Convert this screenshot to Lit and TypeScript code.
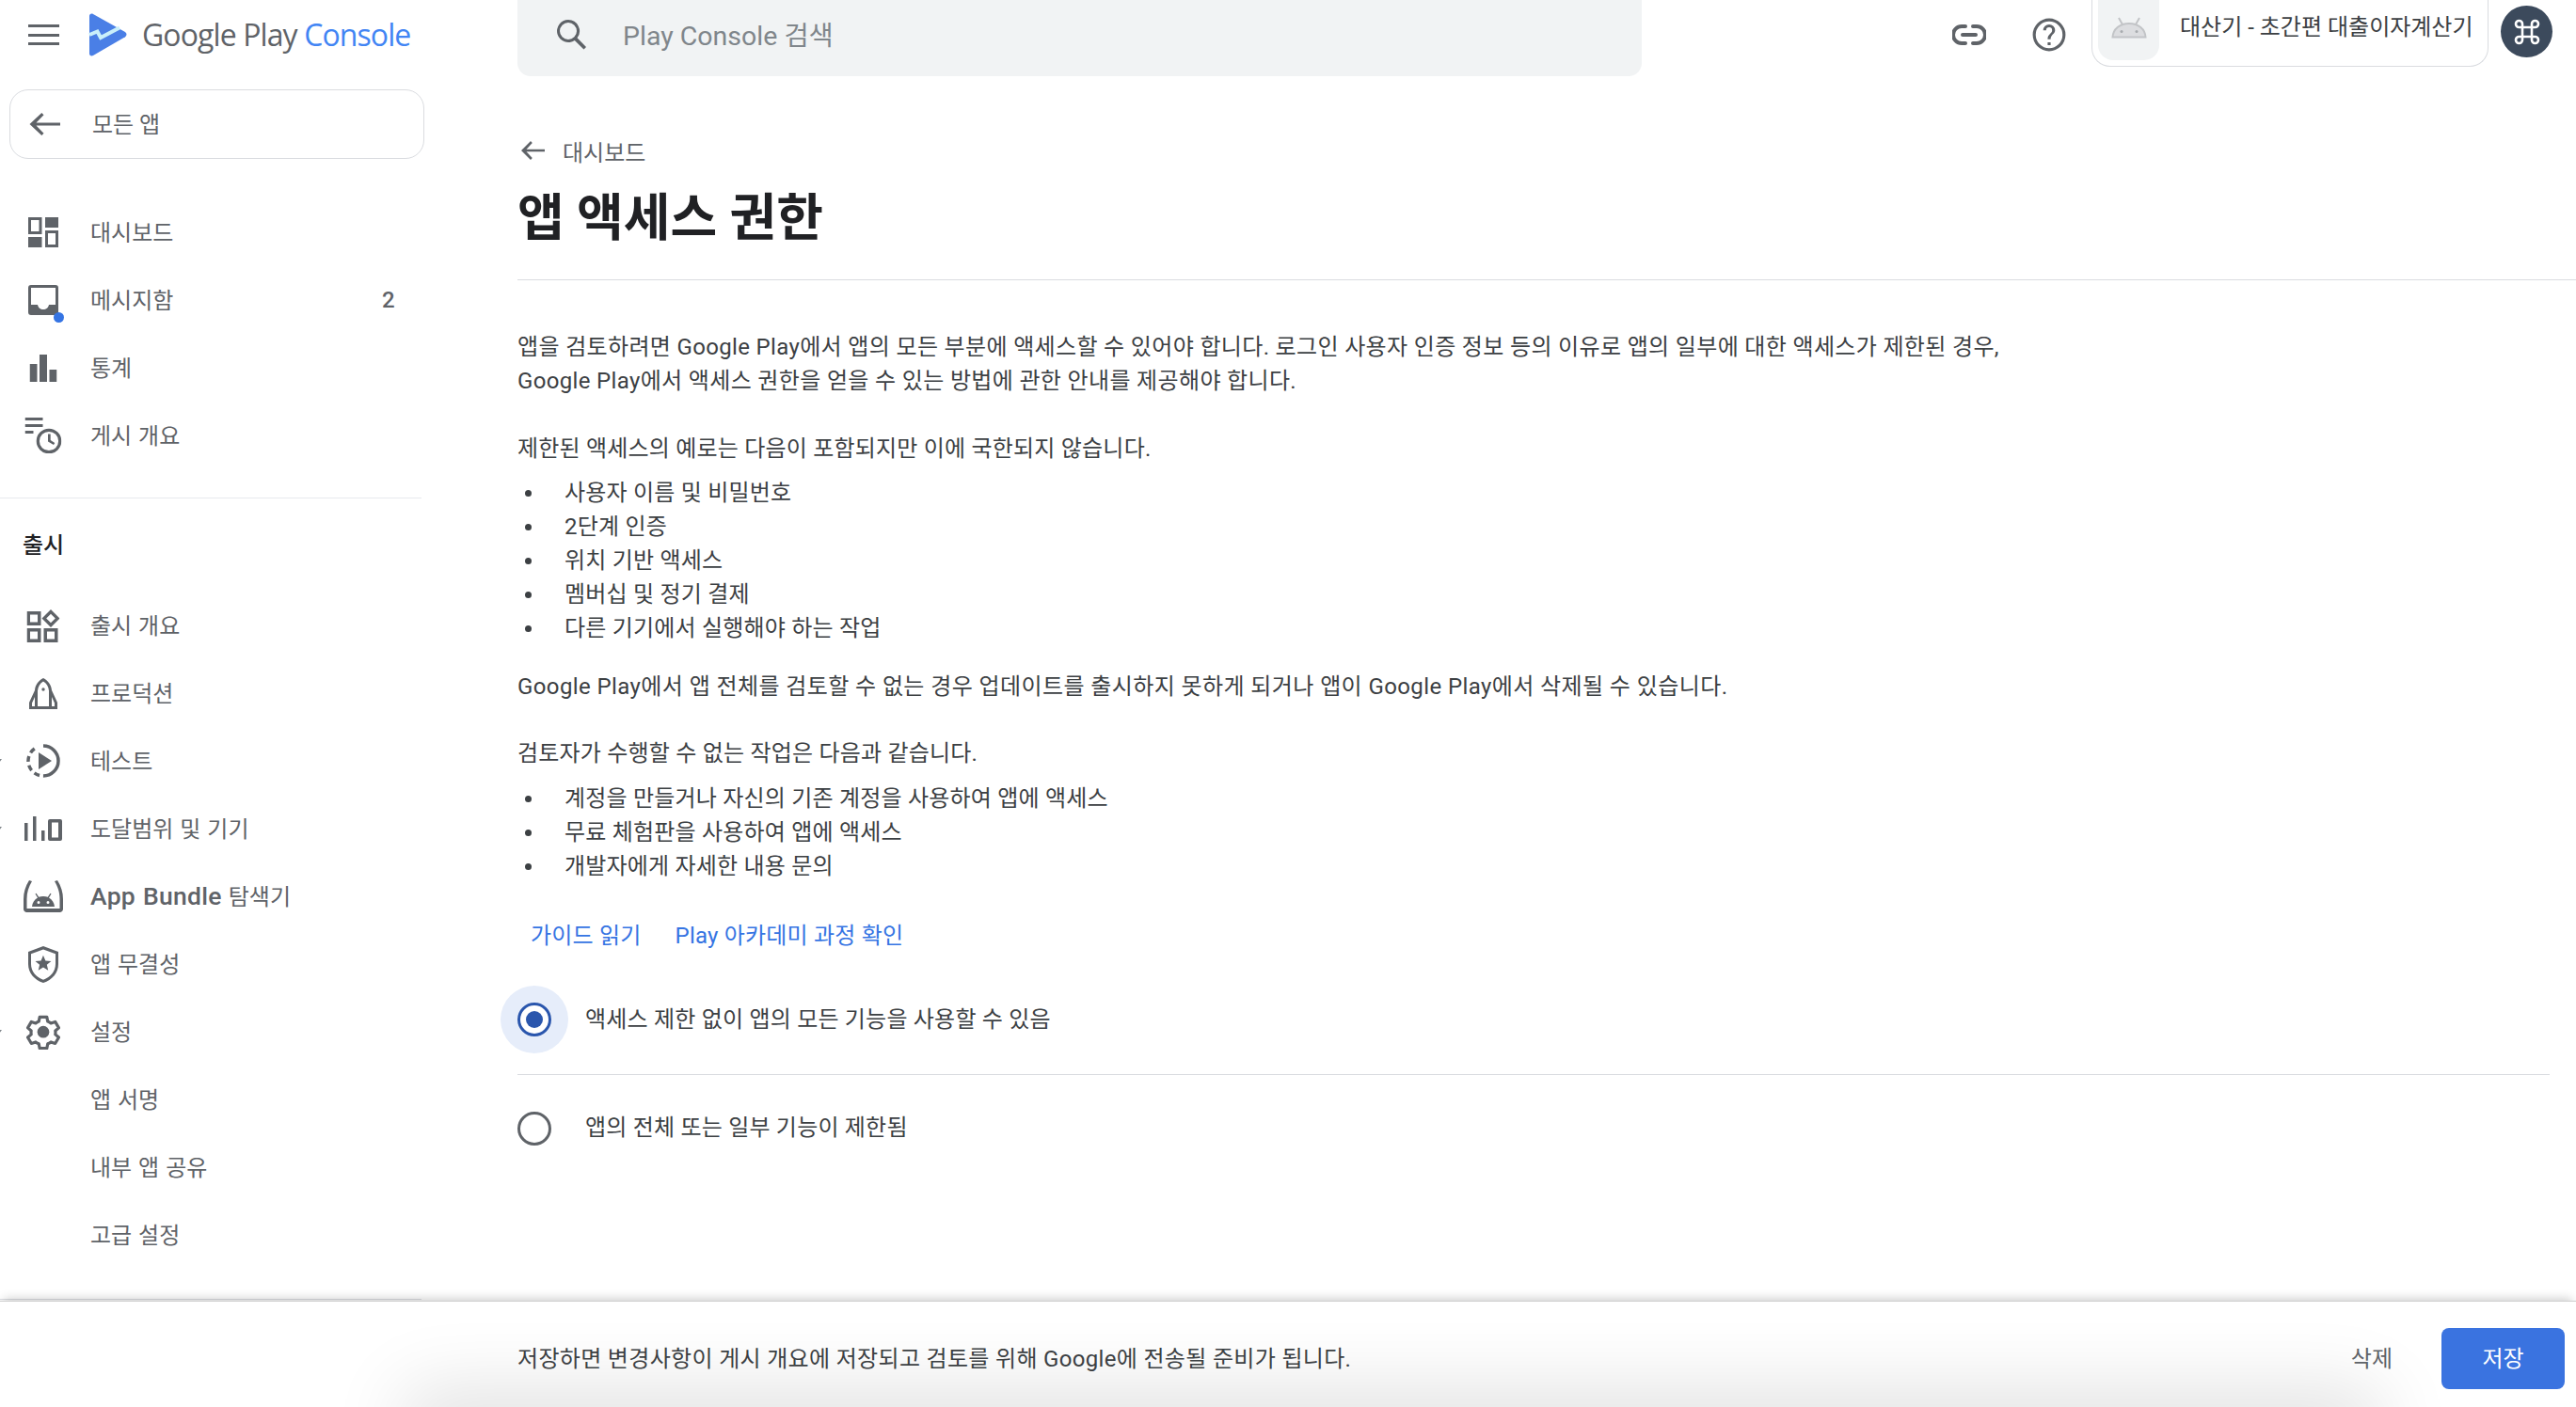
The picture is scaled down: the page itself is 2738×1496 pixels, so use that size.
import { LitElement, html, css, svg } from "lit";
import { customElement } from "lit/decorators.js";

const I: Record<string, any> = {
  dash: svg`<path fill-rule="evenodd" d="M0 0h14.500v18H0zM3 3v12h8.500V3zM18 0h14v11H18zM0 21h14.500v11H0zM18 14h14v18H18zM21 17v12h8V17z"/>`,
  inbox: svg`<path fill-rule="evenodd" d="M3 0h26a3 3 0 0 1 3 3v26a3 3 0 0 1-3 3H3a3 3 0 0 1-3-3V3a3 3 0 0 1 3-3zm0 3v18h7c.5 3 3 5 6 5s5.500-2 6-5h7V3z"/>`,
  stats: svg`<path d="M0 10h8v19H0zM10.500 0h8v29h-8zM21 16h8v13h-8z"/>`,
  pub: svg`<path d="M0 0h19v3H0zM0 7h19v3H0zM0 14h9v3H0z"/><circle cx="25.500" cy="25" r="11.700" fill="none" stroke="#5f6368" stroke-width="3.200"/><path d="M24.500 17.500h2.700v6.600l4.600 2.800-1.300 2.200-6-3.600z"/>`,
  rel: svg`<path fill-rule="evenodd" d="M0 2h15v15H0zm3.500 3.500v8h8v-8zM25.500 0L35 9.500 25.500 19 16 9.500zm0 4.700L20.700 9.500l4.800 4.800 4.800-4.800zM0 20h15v15H0zm3.500 3.500v8h8v-8zM18 20h15v15H18zm3.500 3.500v8h8v-8z"/>`,
  rocket: svg`<path fill-rule="evenodd" d="M15 0c5 2.500 8.500 7 9 13l6 13v7H0v-7l6-13c.5-6 4-10.500 9-13zm0 3.500c-3.500 2-5.500 5.500-6 10V30h12V13.500c-.5-4.500-2.500-8-6-10zM6 20l-3 6.500V30h3zm18 0v10h3v-3.500z"/><circle cx="15" cy="12" r="1.700"/>`,
  test: svg`<circle cx="18" cy="18" r="16" fill="none" stroke="#5f6368" stroke-width="3.500" stroke-dasharray="50 4 6 4 6 4 6 4 6 10.500" transform="rotate(-90 18 18)"/><path d="M13 9l14 9-14 9z"/>`,
  reach: svg`<path fill-rule="evenodd" d="M0 7h3.500v19H0zM9 0h3.500v26H9zM18 15h3.500v11H18zM27 3h11a2 2 0 0 1 2 2v19a2 2 0 0 1-2 2H27a2 2 0 0 1-2-2V5a2 2 0 0 1 2-2zm2 3.500v16h7v-16z"/>`,
  bundle: svg`<path fill-rule="evenodd" d="M6 0l3 1C5.500 7 3.500 12.500 3.500 20v10h35V20c0-7.500-2-13-5.500-19l3-1c4 6 6 13 6 20v10a4 4 0 0 1-3 4H3a4 4 0 0 1-3-4V20C0 13 2 6 6 0z"/><path fill-rule="evenodd" d="M9 28c.4-4 2.500-7.500 6-9.500l-2.500-4 1-.7 2.700 4c3-1.200 6.600-1.200 9.600 0l2.700-4 1 .7-2.500 4c3.500 2 5.600 5.500 6 9.500zm7-6a1.500 1.500 0 1 0 0 3 1.500 1.500 0 0 0 0-3zm10 0a1.500 1.500 0 1 0 0 3 1.500 1.500 0 0 0 0-3z"/>`,
  shield: svg`<path fill-rule="evenodd" d="M16 0l16 6v13c0 9.500-6.500 17-16 20C6.500 36 0 28.500 0 19V6zm0 3.500L3 8.300V19c0 7.800 5.200 14 13 16.800C23.800 33 29 26.800 29 19V8.300z"/><path d="M16 8.500l2.800 6.500 7 .6-5.300 4.600 1.600 6.800-6.100-3.600-6.100 3.600 1.600-6.800-5.300-4.600 7-.6z" transform="translate(2.200 2.500) scale(.86)"/>`,
  gear: svg`<path fill="none" stroke="#5f6368" stroke-width="2" d="M14.400 2.100h-4.800l-.6 3a8 8 0 0 0-2.100 1.200l-2.900-1-2.400 4.100 2.300 2a8 8 0 0 0 0 2.400l-2.300 2 2.400 4.100 2.900-1a8 8 0 0 0 2.100 1.200l.6 3h4.800l.6-3a8 8 0 0 0 2.100-1.200l2.900 1 2.400-4.100-2.300-2a8 8 0 0 0 0-2.400l2.300-2-2.400-4.100-2.900 1a8 8 0 0 0-2.100-1.200z" stroke-linejoin="round"/><circle cx="12" cy="12.100" r="4"/>`,
};

const nav1 = [
  ["대시보드", "dash", 32, 32, "0 0 32 32"],
  ["메시지함", "inbox", 32, 32, "0 0 32 32"],
  ["통계", "stats", 29, 29, "0 0 29 29"],
  ["게시 개요", "pub", 39, 38, "0 0 39 38"],
];
const nav2 = [
  ["출시 개요", "rel", 35, 35, "0 0 35 35"],
  ["프로덕션", "rocket", 30, 33, "0 0 30 33"],
  ["테스트", "test", 36, 36, "0 0 36 36"],
  ["도달범위 및 기기", "reach", 40, 26, "0 0 40 26"],
  ["App Bundle 탐색기", "bundle", 42, 34, "0 0 42 34"],
  ["앱 무결성", "shield", 32, 39, "0 0 32 39"],
  ["설정", "gear", 38, 38, "0 0 24 24"],
  ["앱 서명", "", 0, 0, ""],
  ["내부 앱 공유", "", 0, 0, ""],
  ["고급 설정", "", 0, 0, ""],
];

@customElement("app-root")
export class AppRoot extends LitElement {
  static styles = css`
    :host {
      display: block;
      width: 2738px;
      height: 1496px;
      overflow: hidden;
      background: #fff;
      font-family: Roboto, "Noto Sans CJK KR", sans-serif;
      color: #3c4043;
      font-size: 24px;
    }
    svg { display: block; fill: #5f6368; flex: none; }
    .app { display: flex; flex-direction: column; height: 1496px; position: relative; overflow: hidden; }
    .upper { flex: 1; display: flex; min-height: 0; overflow: hidden; }
    .side { width: 550px; flex: none; display: flex; flex-direction: column; }
    .brand { height: 95px; display: flex; align-items: flex-start; }
    .menu { margin: 26px 0 0 30px; width: 33px; height: 22px; display: flex; flex-direction: column; justify-content: space-between; }
    .menu i { display: block; height: 3px; background: #5f6368; }
    .logo { margin: 14px 0 0 30px; }
    .word { margin: 15px 0 0 15px; font-family: "Open Sans", sans-serif; font-size: 32px; line-height: 44px; color: #5f6368; letter-spacing: -0.900px; white-space: nowrap; }
    .word b { font-weight: 400; color: #4285f4; }
    .all { margin-left: 10px; width: 441px; height: 74px; box-sizing: border-box; border: 1px solid #dadce0; border-radius: 20px; display: flex; align-items: center; color: #5f6368; }
    .all svg { margin-left: 20px; }
    .all span { margin-left: 34px; padding-bottom: 4px; }
    .nav { display: flex; flex-direction: column; }
    .nav.a { margin-top: 42px; }
    .row { height: 72px; position: relative; display: flex; align-items: center; color: #5f6368; word-spacing: 1px; }
    .slot { position: absolute; left: 46px; top: 0; bottom: 0; transform: translateX(-50%); display: flex; align-items: center; }
    .row span { margin-left: 96px; padding-bottom: 4px; }
    .row b { font-weight: 500; font-size: 26.500px; letter-spacing: .3px; }
    .row em { position: absolute; left: 406px; font-style: normal; font-weight: 500; }
    .dot { position: absolute; left: 57px; top: 49px; width: 11px; height: 11px; border-radius: 50%; background: #3574e3; }
    .chev { position: absolute; left: -4px; top: 34px; width: 6px; height: 4px; background: #80868b; clip-path: polygon(0 0,100% 0,50% 100%); }
    .sep { height: 1px; background: #e8eaed; width: 448px; margin-top: 30px; flex: none; }
    .sep.end { margin-top: 32px; background: #dadce0; }
    .sec { height: 99px; display: flex; align-items: center; padding: 0 0 5px 24px; box-sizing: border-box; color: #202124; font-weight: 500; }
    .main { flex: 1; min-width: 0; display: flex; flex-direction: column; }
    .top { height: 81px; display: flex; flex: none; }
    .search { width: 1195px; height: 81px; background: #f1f3f4; border-radius: 0 0 14px 14px; display: flex; align-items: center; color: #80868b; font-size: 28.500px; padding-bottom: 8px; box-sizing: border-box; }
    .search svg { margin-left: 41px; }
    .search span { margin-left: 37px; padding-bottom: 3px; }
    .tools { flex: 1; display: flex; position: relative; }
    .link { position: absolute; left: 330px; top: 23px; }
    .help { position: absolute; left: 414px; top: 18px; }
    .chip { position: absolute; left: 478px; top: -1px; width: 422px; height: 72px; box-sizing: border-box; border: 1px solid #dadce0; border-top: 0; border-radius: 0 0 20px 20px; display: flex; align-items: flex-start; }
    .apk { margin-left: 6px; width: 65px; height: 65px; border-radius: 0 0 16px 16px; background: #f1f3f4; display: flex; align-items: center; justify-content: center; padding-bottom: 4px; box-sizing: border-box; }
    .chip span { margin: 10px 0 0 22px; color: #3c4043; white-space: nowrap; }
    .av { position: absolute; left: 913px; top: 6px; width: 55px; height: 55px; border-radius: 50%; background: #3c4a5c; color: #fff; display: flex; align-items: center; justify-content: center; }
    .content { flex: 1; min-height: 0; letter-spacing: .2px; }
    .crumb { margin-top: 60px; height: 38px; display: flex; align-items: center; color: #5f6368; letter-spacing: 0; padding-left: 4px; }
    .crumb span { margin-left: 19px; }
    h1 { margin: 12px 0 0; height: 84px; font-size: 54px; line-height: 84px; font-weight: 600; color: #202124; letter-spacing: 0; }
    .rule { height: 1px; background: #dadce0; margin-top: 22px; }
    .body { margin-top: 53px; width: 1640px; }
    p { margin: 0; line-height: 36px; white-space: nowrap; }
    p.lat { letter-spacing: .34px; }
    p.g1 { margin-top: 36px; }
    p.g2 { margin-top: 26px; letter-spacing: .4px; }
    p.g3 { margin-top: 35px; }
    ul { margin: 11px 0 0; padding: 0; list-style: none; }
    ul.u2 { margin-top: 12px; }
    li { height: 36px; line-height: 36px; display: flex; align-items: center; white-space: nowrap; }
    li::before { content: ""; width: 7px; height: 7px; border-radius: 50%; background: #3c4043; margin: 0 35px 0 8px; flex: none; }
    .links { display: flex; margin-top: 38px; color: #3574e3; padding-left: 14px; gap: 36px; line-height: 36px; }
    .radio { display: flex; align-items: center; height: 72px; position: relative; white-space: nowrap; }
    .r1 { margin-top: 35px; }
    .ring { margin-left: 0; width: 36px; height: 36px; box-sizing: border-box; border-radius: 50%; border: 3px solid #5f6368; flex: none; }
    .ring.on { border-color: #2a56ad; display: flex; align-items: center; justify-content: center; box-shadow: 0 0 0 18px #e6edfa; }
    .ring.on i { width: 18px; height: 18px; border-radius: 50%; background: #2a56ad; display: block; }
    .radio span { margin-left: 36px; padding-bottom: 5px; }
    .radio.r2 span { padding-bottom: 7px; }
    .div2 { height: 1px; background: #dadce0; margin: 22px 28px 0 0; }
    .r2 { margin-top: 21px; }
    .foot { height: 113px; flex: none; border-top: 1px solid #cfcfcf; box-sizing: border-box; box-shadow: 0 -6px 10px -4px rgba(0,0,0,.2); display: flex; align-items: center; position: relative; background: #fff; padding: 8px 0 0 550px; letter-spacing: .32px; }
    .glow { position: absolute; left: 450px; width: 2060px; top: 113px; height: 40px; box-shadow: 0 0 80px 20px rgba(0,0,0,.12); }
    .ftxt { position: relative; flex: 1; padding-bottom: 4px; }
    .del { position: relative; color: #5f6368; margin-right: 52px; padding-bottom: 4px; letter-spacing: 0; }
    .save { position: relative; width: 131px; height: 65px; background: #3a73e0; color: #fff; border-radius: 8px; display: flex; align-items: center; justify-content: center; margin-right: 12px; letter-spacing: 0; padding-bottom: 3px; box-sizing: border-box; }
  `;

  private row(r: any[], i: number, a: boolean) {
    const [t, ic, w, h, vb] = r;
    const label = t.startsWith("App Bundle") ? html`<b>App Bundle</b> 탐색기` : t;
    return html`<div class="row">
      ${ic ? html`<div class="slot"><svg width=${w} height=${h} viewBox=${vb}>${I[ic]}</svg></div>` : ""}
      <span>${label}</span>
      ${a && i === 1 ? html`<i class="dot"></i><em>2</em>` : ""}
      ${!a && [2, 3, 6].includes(i) ? html`<i class="chev"></i>` : ""}
    </div>`;
  }

  render() {
    return html`<div class="app">
      <div class="upper">
        <aside class="side">
          <div class="brand">
            <div class="menu"><i></i><i></i><i></i></div>
            <svg class="logo" width="43" height="46" viewBox="0 0 43 46">
              <path fill="#4a7fe6" d="M2 3c0-2 2-3 4-2l34 19c2 1.200 2 4 0 5.200L6 45c-2 1-4 0-4-2z"/>
              <path fill="none" stroke="#c9effa" stroke-width="4" d="M2 23l8.500-3.500L14 26l20-10.500"/>
            </svg>
            <div class="word">Google Play <b>Console</b></div>
          </div>
          <div class="all">
            <svg width="33" height="24" viewBox="0 0 33 24"><path d="M33 10.500H7.500l8-8.300L13.300 0 .5 12l12.800 12 2.200-2.200-8-8.300H33z"/></svg>
            <span>모든 앱</span>
          </div>
          <nav class="nav a">${nav1.map((r, i) => this.row(r, i, true))}</nav>
          <div class="sep"></div>
          <div class="sec">출시</div>
          <nav class="nav">${nav2.map((r, i) => this.row(r, i, false))}</nav>
          <div class="sep end"></div>
        </aside>
        <main class="main">
          <div class="top">
            <div class="search">
              <svg width="34" height="34" viewBox="0 0 34 34"><path fill-rule="evenodd" d="M13 1a12 12 0 0 1 9.500 19.300L32 30l-2.500 2.500-9.700-9.600A12 12 0 1 1 13 1zm0 3a9 9 0 1 0 0 18 9 9 0 0 0 0-18z"/></svg>
              <span>Play Console 검색</span>
            </div>
            <div class="tools">
              <svg class="link" width="36" height="28" viewBox="0 0 36 28"><path fill="none" stroke="#5f6368" stroke-width="4" stroke-linecap="round" d="M14 5H10a9 9 0 0 0 0 18h4M22 5h4a9 9 0 0 1 0 18h-4M11 14h14"/></svg>
              <svg class="help" width="38" height="38" viewBox="0 0 24 24"><path fill-rule="evenodd" d="M12 1a11 11 0 1 1 0 22 11 11 0 0 1 0-22zm0 2a9 9 0 1 0 0 18 9 9 0 0 0 0-18zm-1 14h2v2h-2zm1-12a4 4 0 0 1 4 4c0 2.500-3 2.800-3 6h-2c0-3.700 3-3.700 3-6a2 2 0 0 0-4 0H8a4 4 0 0 1 4-4z"/></svg>
              <div class="chip">
                <div class="apk"><svg width="38" height="23" viewBox="0 0 38 23"><path fill="none" stroke="#c2c4c7" stroke-width="2" d="M8 1l4.500 8M30 1l-4.500 8"/><path fill="#dcdde0" stroke="#c2c4c7" stroke-width="2" d="M1.500 21.500C2 13 9 7 19 7s17 6 17.500 14.500z"/><circle cx="11" cy="15.500" r="1.500" fill="#a8abaf"/><circle cx="27" cy="15.500" r="1.500" fill="#a8abaf"/></svg></div>
                <span>대산기 - 초간편 대출이자계산기</span>
              </div>
              <div class="av">
                <svg width="30" height="30" viewBox="0 0 30 30"><path fill="none" stroke="#fff" stroke-width="2.600" d="M10 10h10v10H10zM10 10H6.500A3.500 3.500 0 1 1 10 6.500zM20 10V6.500A3.500 3.500 0 1 1 23.500 10zM10 20v3.500A3.500 3.500 0 1 1 6.500 20zM20 20h3.500A3.500 3.500 0 1 1 20 23.500z"/></svg>
              </div>
            </div>
          </div>
          <div class="content">
            <div class="crumb">
              <svg width="25" height="20" viewBox="0 0 25 20"><path d="M25 8.700H5.500l6.300-6.800L10 0 0 10l10 10 1.800-1.900-6.300-6.800H25z"/></svg>
              <span>대시보드</span>
            </div>
            <h1>앱 액세스 권한</h1>
            <div class="rule"></div>
            <div class="body">
              <p class="lat">앱을 검토하려면 Google Play에서 앱의 모든 부분에 액세스할 수 있어야 합니다. 로그인 사용자 인증 정보 등의 이유로 앱의 일부에 대한 액세스가 제한된 경우,</p>
              <p class="lat">Google Play에서 액세스 권한을 얻을 수 있는 방법에 관한 안내를 제공해야 합니다.</p>
              <p class="g1">제한된 액세스의 예로는 다음이 포함되지만 이에 국한되지 않습니다.</p>
              <ul>
                <li>사용자 이름 및 비밀번호</li><li>2단계 인증</li><li>위치 기반 액세스</li><li>멤버십 및 정기 결제</li><li>다른 기기에서 실행해야 하는 작업</li>
              </ul>
              <p class="g2">Google Play에서 앱 전체를 검토할 수 없는 경우 업데이트를 출시하지 못하게 되거나 앱이 Google Play에서 삭제될 수 있습니다.</p>
              <p class="g3">검토자가 수행할 수 없는 작업은 다음과 같습니다.</p>
              <ul class="u2">
                <li>계정을 만들거나 자신의 기존 계정을 사용하여 앱에 액세스</li><li>무료 체험판을 사용하여 앱에 액세스</li><li>개발자에게 자세한 내용 문의</li>
              </ul>
            </div>
            <div class="links"><span>가이드 읽기</span><span>Play 아카데미 과정 확인</span></div>
            <div class="radio r1"><div class="ring on"><i></i></div><span>액세스 제한 없이 앱의 모든 기능을 사용할 수 있음</span></div>
            <div class="div2"></div>
            <div class="radio r2"><div class="ring"></div><span>앱의 전체 또는 일부 기능이 제한됨</span></div>
          </div>
        </main>
      </div>
      <footer class="foot">
        <div class="glow"></div>
        <div class="ftxt">저장하면 변경사항이 게시 개요에 저장되고 검토를 위해 Google에 전송될 준비가 됩니다.</div>
        <div class="del">삭제</div>
        <div class="save">저장</div>
      </footer>
    </div>`;
  }
}
